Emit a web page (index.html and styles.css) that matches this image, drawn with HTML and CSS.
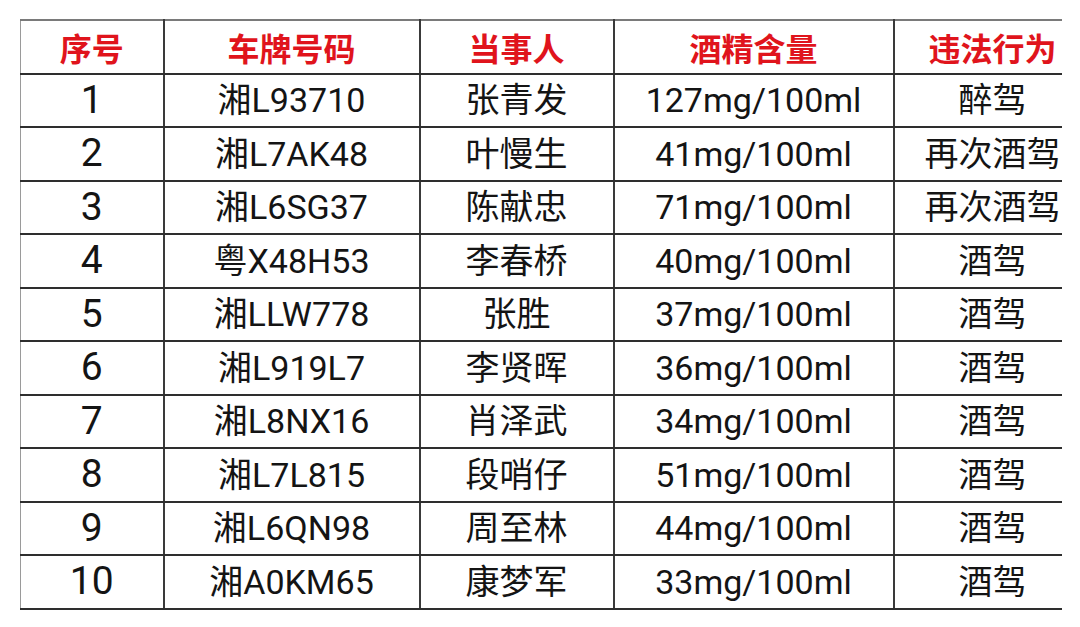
FILE: index.html
```html
<!DOCTYPE html>
<html lang="zh-CN">
<head>
<meta charset="utf-8">
<title>酒驾名单</title>
<link rel="stylesheet" href="styles.css">
</head>
<body>
<div class="frame">
<table class="list">
<colgroup>
<col class="c1"><col class="c2"><col class="c3"><col class="c4"><col class="c5">
</colgroup>
<thead>
<tr><th>序号</th><th>车牌号码</th><th>当事人</th><th>酒精含量</th><th>违法行为</th></tr>
</thead>
<tbody>
<tr><td>1</td><td>湘L93710</td><td>张青发</td><td>127mg/100ml</td><td>醉驾</td></tr>
<tr><td>2</td><td>湘L7AK48</td><td>叶慢生</td><td>41mg/100ml</td><td>再次酒驾</td></tr>
<tr><td>3</td><td>湘L6SG37</td><td>陈献忠</td><td>71mg/100ml</td><td>再次酒驾</td></tr>
<tr><td>4</td><td>粤X48H53</td><td>李春桥</td><td>40mg/100ml</td><td>酒驾</td></tr>
<tr><td>5</td><td>湘LLW778</td><td>张胜</td><td>37mg/100ml</td><td>酒驾</td></tr>
<tr><td>6</td><td>湘L919L7</td><td>李贤晖</td><td>36mg/100ml</td><td>酒驾</td></tr>
<tr><td>7</td><td>湘L8NX16</td><td>肖泽武</td><td>34mg/100ml</td><td>酒驾</td></tr>
<tr><td>8</td><td>湘L7L815</td><td>段哨仔</td><td>51mg/100ml</td><td>酒驾</td></tr>
<tr><td>9</td><td>湘L6QN98</td><td>周至林</td><td>44mg/100ml</td><td>酒驾</td></tr>
<tr><td>10</td><td>湘A0KM65</td><td>康梦军</td><td>33mg/100ml</td><td>酒驾</td></tr>
</tbody>
</table>
</div>
</body>
</html>
```
FILE: styles.css
```css
html, body {
  margin: 0;
  padding: 0;
  background: #ffffff;
}
body {
  font-family: "Roboto", "Noto Sans CJK SC", sans-serif;
  color: #141414;
}
.frame {
  margin: 19px 0 0 20px;
  width: 1042px;
  overflow: hidden;
}
.list {
  border-collapse: collapse;
  table-layout: fixed;
  width: 1070px;
}
.c1 { width: 143px; }
.c2 { width: 256px; }
.c3 { width: 194px; }
.c4 { width: 280px; }
.c5 { width: 197px; }
.list th, .list td {
  height: 51.5px;
  padding: 0;
  text-align: center;
  vertical-align: middle;
  white-space: nowrap;
  border-bottom: 2px solid #2e2e2e;
  border-right: 2px solid #3a3a3a;
  font-size: 34px;
  line-height: 1;
}
.list th {
  font-family: "Noto Sans CJK SC", sans-serif;
  font-weight: 700;
  font-size: 32px;
  color: #e0141c;
  border-top: 2px solid #7a7a7a;
}
.list td {
  font-weight: 400;
}
.list td:first-child {
  font-size: 39px;
}
.list th:first-child, .list td:first-child {
  border-left: 1px solid #9a9a9a;
}
.list th:last-child, .list td:last-child {
  border-right: none;
}
```
